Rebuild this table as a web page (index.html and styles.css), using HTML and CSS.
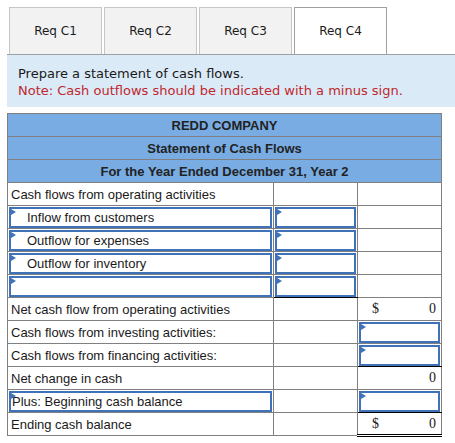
FILE: index.html
```html
<!DOCTYPE html>
<html>
<head>
<meta charset="utf-8">
<link rel="stylesheet" href="styles.css">
</head>
<body>
<div class="page">
  <div class="tabs">
    <div class="tab">Req C1</div>
    <div class="tab">Req C2</div>
    <div class="tab">Req C3</div>
    <div class="tab active">Req C4</div>
  </div>
  <div class="instr">
    <div>Prepare a statement of cash flows.</div>
    <div class="note">Note: Cash outflows should be indicated with a minus sign.</div>
  </div>
  <table class="stmt">
    <colgroup><col class="c1"><col class="c2"><col class="c3"></colgroup>
    <tr class="hd"><td colspan="3">REDD COMPANY</td></tr>
    <tr class="hd"><td colspan="3">Statement of Cash Flows</td></tr>
    <tr class="hd"><td colspan="3">For the Year Ended December 31, Year 2</td></tr>
    <tr><td class="lbl">Cash flows from operating activities</td><td></td><td></td></tr>
    <tr><td class="in"><div class="box ind">Inflow from customers</div></td><td class="in"><div class="box"></div></td><td></td></tr>
    <tr><td class="in"><div class="box ind">Outflow for expenses</div></td><td class="in"><div class="box"></div></td><td></td></tr>
    <tr><td class="in"><div class="box ind">Outflow for inventory</div></td><td class="in"><div class="box"></div></td><td></td></tr>
    <tr><td class="in"><div class="box"></div></td><td class="in sub"><div class="box"></div></td><td></td></tr>
    <tr><td class="lbl">Net cash flow from operating activities</td><td></td><td class="amt"><span>$</span><span>0</span></td></tr>
    <tr><td class="lbl">Cash flows from investing activities:</td><td></td><td class="in"><div class="box"></div></td></tr>
    <tr><td class="lbl">Cash flows from financing activities:</td><td></td><td class="in sub"><div class="box"></div></td></tr>
    <tr><td class="lbl">Net change in cash</td><td></td><td class="amt"><span></span><span>0</span></td></tr>
    <tr><td class="in"><div class="box plain">Plus: Beginning cash balance</div></td><td></td><td class="in sub"><div class="box"></div></td></tr>
    <tr><td class="lbl">Ending cash balance</td><td></td><td class="amt dbl"><span>$</span><span>0</span></td></tr>
  </table>
</div>
</body>
</html>
```
FILE: styles.css
```css
html, body {
  margin: 0;
  padding: 0;
  background: #ffffff;
}
.page {
  padding: 7px 0 0 7px;
  font-family: "DejaVu Sans", Verdana, sans-serif;
}
.tabs {
  display: flex;
  gap: 2px;
  padding-left: 2px;
  border-bottom: 1px solid #a0a0a0;
  height: 47px;
}
.tab {
  box-sizing: border-box;
  width: 93px;
  height: 47px;
  background: #f2f2f2;
  border: 1px solid #c6c6c6;
  border-bottom: none;
  display: flex;
  align-items: center;
  justify-content: center;
  font-size: 12px;
  color: #1a1a1a;
}
.tab.active {
  background: #ffffff;
  border-color: #a0a0a0;
}
.instr {
  background: #dbeaf7;
  height: 52px;
  box-sizing: border-box;
  padding: 10px 0 0 11px;
  font-size: 13px;
  line-height: 17px;
  color: #1a1a1a;
}
.note {
  color: #c0282d;
}
.stmt {
  margin-top: 6px;
  border-collapse: collapse;
  width: 434px;
  table-layout: fixed;
  font-family: "Liberation Sans", Arial, sans-serif;
  font-size: 13px;
  color: #1a1a1a;
}
.c1 { width: 266px; }
.c2 { width: 84px; }
.c3 { width: 84px; }
.stmt td {
  border: 1px solid #808080;
  height: 23px;
  padding: 0;
  box-sizing: border-box;
}
.stmt tr.hd td {
  background: #78ace3;
  text-align: center;
  font-weight: bold;
  color: #222;
}
.stmt td.lbl {
  padding-left: 3px;
}
.stmt td.in {
  padding: 1px 1px 0 1px;
  vertical-align: top;
}
.stmt td.sub {
  border-bottom: 1px solid #000;
}
.box {
  position: relative;
  box-sizing: border-box;
  height: 21px;
  border: 2px solid #3f72b8;
  line-height: 17px;
}
.box::before {
  content: "";
  position: absolute;
  left: 0;
  top: 0;
  border-left: 5px solid #3f72b8;
  border-top: 3px solid transparent;
  border-bottom: 3px solid transparent;
}
.box.ind {
  padding-left: 16px;
}
.box.plain {
  padding-left: 1px;
}
.stmt td.amt {
  font-family: "Liberation Serif", "Times New Roman", serif;
  font-size: 14px;
  padding: 0 5px 0 14px;
}
.stmt td.amt span:first-child {
  float: left;
}
.stmt td.amt span:last-child {
  float: right;
}
.stmt td.dbl {
  border-bottom: 3px double #000;
}
```
